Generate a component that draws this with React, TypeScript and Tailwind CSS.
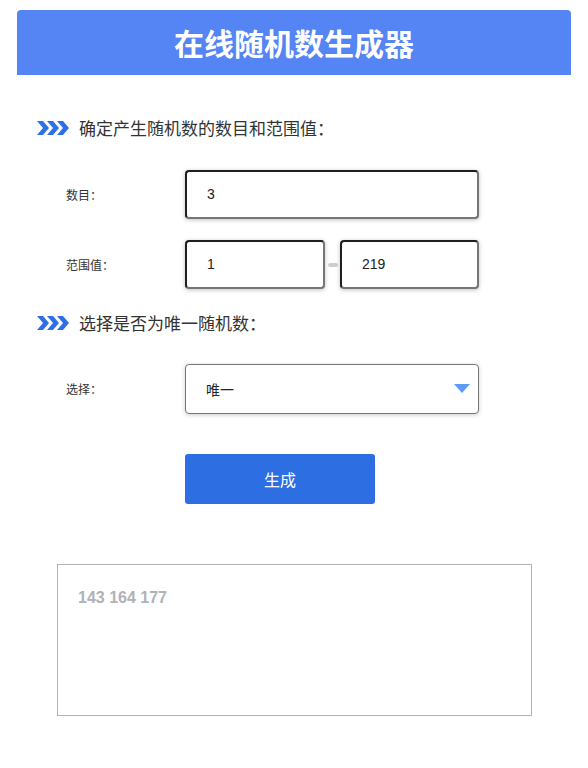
import React from "react";

const font = { fontFamily: '"Microsoft YaHei", "Noto Sans CJK SC", "Liberation Sans", sans-serif' };

function Chevrons() {
  return (
    <svg width="32" height="14" viewBox="0 0 32 14" className="shrink-0">
      {[0, 10, 20].map((x) => (
        <path key={x} d={`M${x} 0 H${x + 6} L${x + 12} 7 L${x + 6} 14 H${x} L${x + 6} 7 Z`} fill="#2f6fe6" />
      ))}
    </svg>
  );
}

const inputCls =
  "h-[49px] bg-white rounded-[4px] border-2 border-t-[#1f1f1f] border-l-[#1f1f1f] border-r-[#767676] border-b-[#767676] shadow-[0_1px_4px_rgba(0,0,0,0.25)] pl-[20px] flex items-center text-[14px] text-[#222]";

const digitFont = { fontFamily: '"Liberation Sans", Arial, sans-serif' };

export default function App() {
  return (
    <div className="w-[588px] h-[768px] bg-white" style={font}>
      <div className="pt-[10px] px-[17px]">
        <div className="h-[65px] rounded-t-[4px] bg-[#5584f5] flex items-center justify-center">
          <span className="text-white text-[30px] font-bold">在线随机数生成器</span>
        </div>
      </div>

      <div className="pl-[37px] mt-[42px] flex items-center gap-[10px] h-[22px]">
        <Chevrons />
        <span className="text-[17px] text-[#333]">确定产生随机数的数目和范围值：</span>
      </div>

      <div className="mt-[31px] flex items-center">
        <div className="w-[185px] pl-[66px] text-[12px] text-[#333]">数目：</div>
        <div className={inputCls + " w-[294px]"} style={digitFont}>3</div>
      </div>

      <div className="mt-[21px] flex items-center">
        <div className="w-[185px] pl-[66px] text-[12px] text-[#333]">范围值：</div>
        <div className={inputCls + " w-[140px]"} style={digitFont}>1</div>
        <div className="w-[15px] flex justify-center">
          <div className="w-[10px] h-[4px] rounded-[2px] bg-[#cfcfcf]" />
        </div>
        <div className={inputCls + " w-[139px]"} style={digitFont}>219</div>
      </div>

      <div className="pl-[37px] mt-[23px] flex items-center gap-[10px] h-[22px]">
        <Chevrons />
        <span className="text-[17px] text-[#333]">选择是否为唯一随机数：</span>
      </div>

      <div className="mt-[30px] flex items-center">
        <div className="w-[185px] pl-[66px] text-[12px] text-[#333]">选择：</div>
        <div className="w-[294px] h-[50px] bg-white rounded-[4px] border border-[#777] shadow-[0_1px_4px_rgba(0,0,0,0.2)] pl-[20px] pr-[8px] flex items-center justify-between text-[14px] text-[#222]">
          <span>唯一</span>
          <svg width="16" height="10" viewBox="0 0 16 10">
            <path d="M0 0 H16 L8 9 Z" fill="#5b9bf5" />
          </svg>
        </div>
      </div>

      <div className="mt-[40px] pl-[185px]">
        <div className="w-[190px] h-[50px] rounded-[3px] bg-[#2d6fe3] flex items-center justify-center text-white text-[16px]">
          生成
        </div>
      </div>

      <div className="mt-[60px] ml-[57px] w-[475px] h-[152px] border border-[#b3b3b3] pl-[20px] pt-[19px]">
        <span className="text-[16px] font-bold text-[#aeb2b9]" style={digitFont}>
          143 164 177
        </span>
      </div>
    </div>
  );
}
